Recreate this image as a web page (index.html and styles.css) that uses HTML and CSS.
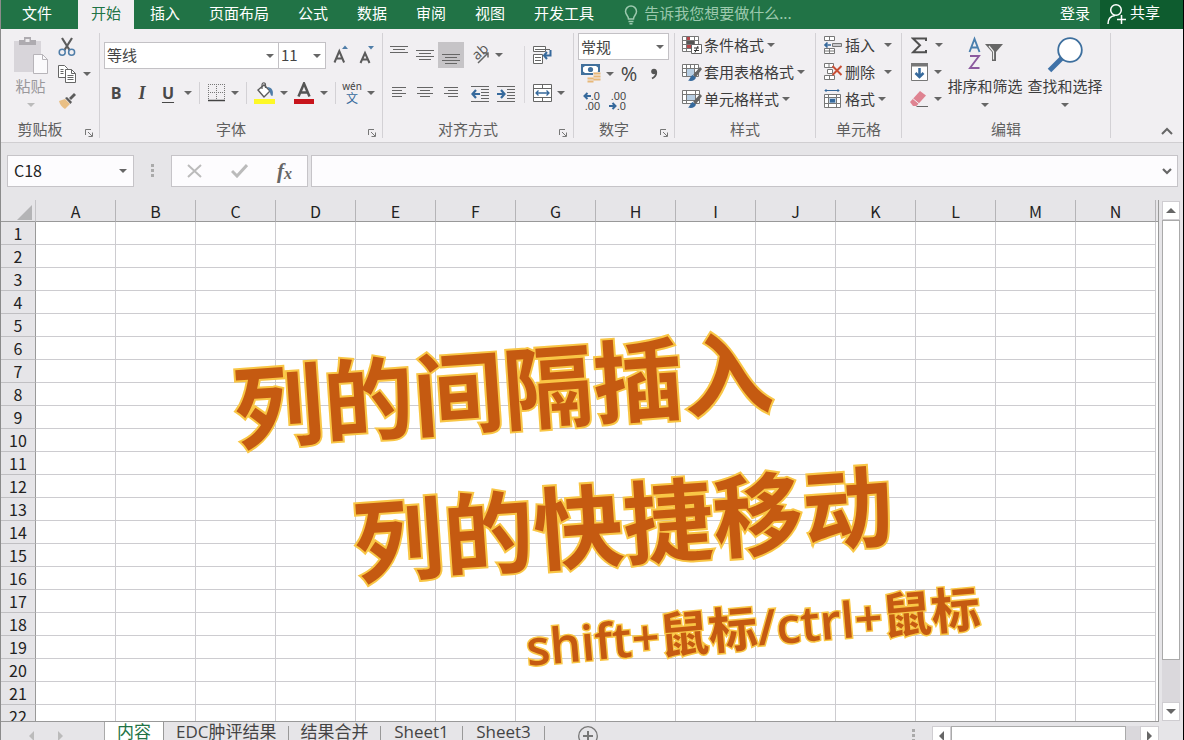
FILE: index.html
```html
<!DOCTYPE html>
<html lang="zh-CN">
<head>
<meta charset="utf-8">
<title>内容 - Excel</title>
<link rel="stylesheet" href="styles.css">
</head>
<body>
<div class="app">
  <header class="tabs">
    <button class="tab file">文件</button>
    <nav class="tab-list">
      <button class="tab active">开始</button>
      <button class="tab">插入</button>
      <button class="tab">页面布局</button>
      <button class="tab">公式</button>
      <button class="tab">数据</button>
      <button class="tab">审阅</button>
      <button class="tab">视图</button>
      <button class="tab">开发工具</button>
    </nav>
    <label class="tell">
      <svg width="14" height="20" viewBox="0 0 14 20" fill="none" stroke="#9cc9ae" stroke-width="1.5"><path d="M4.5 14C4.500 11 1.500 9.500 1.500 6.500a5.500 5.500 0 0 1 11 0C12.500 9.500 9.500 11 9.500 14zM4.500 16.500h5M5.500 18.700h3"/></svg>
      <input type="text" placeholder="告诉我您想要做什么..." aria-label="告诉我您想要做什么">
    </label>
    <button class="tab login">登录</button>
    <button class="share">
      <svg width="20" height="22" viewBox="0 0 20 22" fill="none" stroke="#fff" stroke-width="1.500"><circle cx="9" cy="7" r="5.300"/><path d="M1 21c0-5 3-8 7-8.500M14.500 12v9M10 16.500h9"/></svg>
      <span>共享</span>
    </button>
  </header>

  <section class="ribbon">
    <div class="group clipboard">
      <div class="body">
        <button class="big muted">
          <svg width="36" height="40" viewBox="0 0 36 40"><path d="M1 5h27v31H1z" fill="#d8d5da"/><path d="M6 4h5V1h7v3h5v5H6z" fill="#aeabb0"/><path d="M12.500 3h4v3h-4z" fill="#eceaed"/><path d="M20.500 18.500h9l5 5v14h-14z" fill="#fbfafc" stroke="#b7b4b9"/><path d="M29.500 18.500v5h5" fill="none" stroke="#b7b4b9"/></svg>
          <span>粘贴</span><i class="arrow"></i>
        </button>
        <div class="stack">
          <button class="ico w20" aria-label="剪切"><svg width="18" height="20" viewBox="0 0 18 20" fill="none"><path d="M4 1l7.500 12M14 1L6.500 13" stroke="#5c5c5c" stroke-width="2.200"/><circle cx="4.200" cy="15.200" r="3" stroke="#4f7da8" stroke-width="1.500"/><circle cx="13.600" cy="15.200" r="3" stroke="#4f7da8" stroke-width="1.500"/></svg></button>
          <div class="row"><button class="ico w20" aria-label="复制"><svg width="18" height="18" viewBox="0 0 18 18" fill="#fff" stroke="#666"><path d="M.5.5h6l3 3v9h-9z"/><path d="M2.500 4.500h3M2.500 6.500h3M2.500 8.500h3"/><path d="M7.500 4.500h6l4 4v9h-10z"/><path d="M13.500 4.500v4h4M9.500 10.500h6M9.500 12.500h6M9.500 14.500h6" fill="none"/></svg></button><button class="ico w20" aria-label="复制选项"><i class="arrow"></i></button></div>
          <button class="ico w20" aria-label="格式刷"><svg width="18" height="16" viewBox="0 0 18 16"><path d="M1 8l6-2 5 5-5 5C4 14 2 12 1 8z" fill="#e9bf85"/><path d="M7 5l2-1 5 5-1.500 2z" fill="#5c5c5c"/><path d="M11 5l5-5 2 2-5 5z" fill="#5c5c5c"/></svg></button>
        </div>
      </div>
      <div class="foot set"><span>剪贴板</span><button class="launch" aria-label="剪贴板设置"><svg width="8" height="8" viewBox="0 0 8 8" fill="none" stroke="#777"><path d="M.5 6V.5H6M3 3l4 4M7.500 3.500v4h-4"/></svg></button></div>
    </div>

    <div class="group font">
      <div class="body lines">
        <div class="row top">
          <span class="pick face"><select aria-label="字体"><option>等线</option></select></span>
          <span class="pick size"><select aria-label="字号"><option>11</option></select></span>
          <button class="ico w26 grow" aria-label="增大字号"><svg width="17" height="20" viewBox="0 0 17 20"><path d="M1.500 17.500L6.300 6l4.800 11.500M3 13.500h6.600" fill="none" stroke="#5a5a5a" stroke-width="2"/><path d="M9 4l3-3.500L15 4z" fill="#4f7da8"/></svg></button>
          <button class="ico w26" aria-label="减小字号"><svg width="17" height="20" viewBox="0 0 17 20"><path d="M1.500 18L6 8l4.500 10M3 14.500h6" fill="none" stroke="#5a5a5a" stroke-width="2"/><path d="M9 1h6l-3 3.500z" fill="#4f7da8"/></svg></button>
        </div>
        <div class="row">
          <button class="ico w26 b">B</button><button class="ico w26 i">I</button><button class="ico w26 u">U</button><button class="ico w14" aria-label="下划线选项"><i class="arrow"></i></button>
          <i class="sep"></i>
          <button class="ico w24" aria-label="边框"><svg width="17" height="18" viewBox="0 0 17 18" fill="none" stroke="#777"><path d="M0 .5h17M.5 0v16M16.500 0v16M8.500 0v16M0 8.500h17" stroke-dasharray="1 1"/><path d="M0 16.500h17" stroke="#444" stroke-width="1.500"/></svg></button><button class="ico w14" aria-label="边框选项"><i class="arrow"></i></button>
          <i class="sep"></i>
          <button class="ico w26" aria-label="填充颜色"><svg width="22" height="22" viewBox="0 0 22 22"><path d="M5 8l6-5 6 6-6 6z" fill="#fff" stroke="#5c5c5c" stroke-width="1.400"/><path d="M9 7V3c0-3 3.500-3 3.500 0v3" fill="none" stroke="#5c5c5c" stroke-width="1.200"/><path d="M14 5c5 0 7 4 5.500 9-3 0-1-4-5.500-9z" fill="#4f7da8"/><path d="M1 17h21v5H1z" fill="#fdf827"/></svg></button><button class="ico w14" aria-label="填充颜色选项"><i class="arrow"></i></button>
          <button class="ico w26" aria-label="字体颜色"><svg width="20" height="22" viewBox="0 0 20 22"><path d="M4.500 14.500L10 1.500l5.500 13M6.500 10.500h7" fill="none" stroke="#555" stroke-width="2.500"/><path d="M0 17h20v5H0z" fill="#c8141c"/></svg></button><button class="ico w14" aria-label="字体颜色选项"><i class="arrow"></i></button>
          <i class="sep"></i>
          <button class="ico w24 wen"><span>wén</span><b>文</b></button><button class="ico w14" aria-label="拼音选项"><i class="arrow"></i></button>
        </div>
      </div>
      <div class="foot set"><span>字体</span><button class="launch" aria-label="字体设置"><svg width="8" height="8" viewBox="0 0 8 8" fill="none" stroke="#777"><path d="M.5 6V.5H6M3 3l4 4M7.500 3.500v4h-4"/></svg></button></div>
    </div>

    <div class="group align">
      <div class="body">
        <div class="lines part">
          <div class="row top">
            <button class="ico w26" aria-label="顶端对齐"><svg width="18" height="26" viewBox="0 0 18 26" stroke="#666"><path d="M0 4.500h18M3 7.500h12M0 10.500h18"/></svg></button>
            <button class="ico w26" aria-label="垂直居中"><svg width="18" height="26" viewBox="0 0 18 26" stroke="#666"><path d="M0 8.500h18M3 11.500h12M0 14.500h18M3 17.500h12"/></svg></button>
            <button class="ico w26 on" aria-label="底端对齐"><svg width="18" height="26" viewBox="0 0 18 26" stroke="#666"><path d="M0 12.500h18M3 15.500h12M0 18.500h18M3 21.500h12"/></svg></button>
            <button class="ico w26 apart" aria-label="方向"><svg width="24" height="24" viewBox="0 0 24 24"><text x="5" y="17" font-size="14" transform="rotate(-42 8 12)">ab</text><path d="M10 20L20 10M15.500 10H20v4.500" fill="none" stroke="#666" stroke-width="1.500"/></svg></button><button class="ico w12" aria-label="方向选项"><i class="arrow"></i></button>
          </div>
          <div class="row">
            <button class="ico w26" aria-label="左对齐"><svg width="16" height="14" viewBox="0 0 16 14" stroke="#666"><path d="M1 1.500h14M1 4.500h10M1 7.500h14M1 10.500h10"/></svg></button>
            <button class="ico w26" aria-label="居中"><svg width="16" height="14" viewBox="0 0 16 14" stroke="#666"><path d="M0 1.500h16M3 4.500h10M0 7.500h16M3 10.500h10"/></svg></button>
            <button class="ico w26" aria-label="右对齐"><svg width="16" height="14" viewBox="0 0 16 14" stroke="#666"><path d="M1 1.500h14M5 4.500h10M1 7.500h14M5 10.500h10"/></svg></button>
            <button class="ico w26 apart" aria-label="减少缩进"><svg width="18" height="17" viewBox="0 0 18 17" fill="none" stroke="#666"><path d="M0 1.500h18M10 4.500h8M10 7.500h8M10 10.500h8M10 13.500h8M0 16.500h18"/><path d="M9 9H1.500M5 5L1.500 9 5 13" stroke="#36699c" stroke-width="2.200"/></svg></button>
            <button class="ico w26" aria-label="增加缩进"><svg width="18" height="17" viewBox="0 0 18 17" fill="none" stroke="#666"><path d="M0 1.500h18M10 4.500h8M10 7.500h8M10 10.500h8M10 13.500h8M0 16.500h18"/><path d="M0 9h7.500M4 5l3.500 4L4 13" stroke="#36699c" stroke-width="2.200"/></svg></button>
          </div>
        </div>
        <i class="rule"></i>
        <div class="lines part">
          <div class="row top"><button class="ico w26" aria-label="自动换行"><svg width="20" height="20" viewBox="0 0 20 20" fill="#fff" stroke="#666"><path d="M1.500 1.500h12v5h-12zM1.500 9.500h9v9h-9z"/><path d="M3 4.500h15M3 12.500h6M3 15.500h6"/><path d="M18.500 5v5.500H13M15 7l-3 3.500 3 3.500" fill="none" stroke="#36699c" stroke-width="2"/></svg></button></div>
          <div class="row"><button class="ico w26" aria-label="合并后居中"><svg width="19" height="20" viewBox="0 0 19 20" fill="#fff" stroke="#666"><path d="M.5 1.500h18v17H.5zM.5 5.500h18M.5 14.500h18M9.500 1.500v4M9.500 14.500v4"/><path d="M3 10h13M5.500 7.500L3 10l2.500 2.500M13.500 7.500L16 10l-2.500 2.500" fill="none" stroke="#36699c" stroke-width="1.300"/></svg></button><button class="ico w12" aria-label="合并选项"><i class="arrow"></i></button></div>
        </div>
      </div>
      <div class="foot set"><span>对齐方式</span><button class="launch" aria-label="对齐设置"><svg width="8" height="8" viewBox="0 0 8 8" fill="none" stroke="#777"><path d="M.5 6V.5H6M3 3l4 4M7.500 3.500v4h-4"/></svg></button></div>
    </div>

    <div class="group number">
      <div class="body stack">
        <span class="pick"><select aria-label="数字格式"><option>常规</option></select></span>
        <div class="row">
          <button class="ico w26" aria-label="会计数字格式"><svg width="20" height="19" viewBox="0 0 20 19"><path d="M0 0h19v11H0z" fill="#41709c"/><path d="M2 3.500L4 2h11l2 1.500v4L15 9H4L2 7.500z" fill="#fff"/><circle cx="9.500" cy="5.500" r="2.600" fill="#41709c"/><path d="M12 8h8v10h-6v1H6v-6h6z" fill="#f1eff2"/><path d="M12.500 9.500h7M12.500 12.500h7M12.500 15.500h7M6.500 14.500h6M6.500 17.500h6" stroke="#e8b878" stroke-width="2"/></svg></button><button class="ico w12" aria-label="会计选项"><i class="arrow"></i></button>
          <button class="ico w26 pct">%</button><button class="ico w24" aria-label="千位分隔"><svg width="8" height="12" viewBox="0 0 8 12"><circle cx="4" cy="3.500" r="2.800" fill="#555"/><path d="M6 3c1 4-1 6-4 7.500" fill="none" stroke="#555" stroke-width="1.800"/></svg></button>
        </div>
        <div class="row">
          <button class="ico w26 dec"><span><svg width="8" height="8" viewBox="0 0 8 8" fill="none" stroke="#36699c" stroke-width="2"><path d="M8 4H1.500M4.500 1l-3 3 3 3"/></svg>.0</span><span>.00</span></button>
          <button class="ico w26 dec"><span>.00</span><span><svg width="8" height="8" viewBox="0 0 8 8" fill="none" stroke="#36699c" stroke-width="2"><path d="M0 4h6.500M3.500 1l3 3-3 3"/></svg>.0</span></button>
        </div>
      </div>
      <div class="foot set"><span>数字</span><button class="launch" aria-label="数字设置"><svg width="8" height="8" viewBox="0 0 8 8" fill="none" stroke="#777"><path d="M.5 6V.5H6M3 3l4 4M7.500 3.500v4h-4"/></svg></button></div>
    </div>

    <div class="group styles">
      <div class="body stack">
        <button class="cmd"><svg width="20" height="20" viewBox="0 0 20 20"><path d="M.5 1.500h16v15H.5zM.5 5.500h16M.5 9.500h16M.5 13.500h16M4.500 1.500v15M12.500 1.500v15" fill="#fff" stroke="#777"/><path d="M5 2h3v3H5zM5 10h4v3H5z" fill="#b5474b"/><path d="M5 6h7v3H5z" fill="#555"/><path d="M9.500 9.500h10v9h-10z" fill="#fff" stroke="#666"/><path d="M12 13h5M12 15.500h5M16 11l-3 6.500" stroke="#333" fill="none"/></svg>条件格式<i class="arrow"></i></button>
        <button class="cmd"><svg width="20" height="20" viewBox="0 0 20 20"><path d="M.5 2.500h16v12H.5zM.5 6.500h16M.5 10.500h16M4.500 2.500v12M8.500 2.500v12M12.500 2.500v12" fill="#fff" stroke="#777"/><path d="M5 7h7v7H5z" fill="#b8cfe4"/><path d="M18 5l2 2-6 8-3-2z" fill="#666"/><path d="M10.500 13l3.500 2.500c-1 3-4 4-8 3 2-1 2-4 4.500-5.500z" fill="#36699c"/></svg>套用表格格式<i class="arrow"></i></button>
        <button class="cmd"><svg width="20" height="20" viewBox="0 0 20 20"><path d="M.5 1.500h17v13H.5zM.5 5.500h17M.5 11.500h17M4.500 1.500v13M13.500 1.500v13" fill="#fff" stroke="#777"/><path d="M5 6h8v5H5z" fill="#b8cfe4"/><path d="M18 5l2 2-6 8-3-2z" fill="#666"/><path d="M10.500 13l3.500 2.500c-1 3-4 4-8 3 2-1 2-4 4.500-5.500z" fill="#36699c"/></svg>单元格样式<i class="arrow"></i></button>
      </div>
      <div class="foot"><span>样式</span></div>
    </div>

    <div class="group cells">
      <div class="body stack">
        <button class="cmd far"><svg width="20" height="20" viewBox="0 0 20 20"><path d="M1.500 1.500h10v4h-10zM6.500 1.500v4M1.500 13.500h10v5h-10zM6.500 13.500v5M1.500 16h10" fill="#fff" stroke="#777"/><path d="M9.500 8.500h9v3h-9z" fill="#c9c9cd" stroke="#777"/><path d="M8 10H2M4.500 7.500L2 10l2.500 2.500" fill="none" stroke="#36699c" stroke-width="1.700"/></svg>插入<i class="arrow"></i></button>
        <button class="cmd far"><svg width="20" height="20" viewBox="0 0 20 20"><path d="M1.500 1.500h9v4h-9zM6 1.500v4M1.500 13.500h10v4h-10zM6.500 13.500v4M4.500 7.500h5v4h-5z" fill="#fff" stroke="#777"/><path d="M9.500 4l9 9M18.500 4l-9 9" stroke="#c94f35" stroke-width="2"/></svg>删除<i class="arrow"></i></button>
        <button class="cmd"><svg width="20" height="20" viewBox="0 0 20 20" fill="none" stroke="#777"><path d="M2 1.500h14M3.500 0L2 1.500 3.500 3M14.500 0L16 1.500 14.500 3" stroke="#36699c"/><path d="M1.500 5.500h16v13h-16zM1.500 8.500h16M1.500 14.500h16M5.500 5.500v13M13.500 5.500v13" fill="#fff"/><path d="M5.500 8.500h8v6h-8z" fill="#b8cfe4"/><path d="M7 10h5v3.500H7z" fill="#36699c" stroke="none"/></svg>格式<i class="arrow"></i></button>
      </div>
      <div class="foot"><span>单元格</span></div>
    </div>

    <div class="group editing">
      <div class="body">
        <div class="stack">
          <div class="row"><button class="ico w26" aria-label="求和"><svg width="16" height="17" viewBox="0 0 16 17"><path d="M15 4V1.500H2L9 8.300 2 15.300h13V13" fill="none" stroke="#505050" stroke-width="2"/></svg></button><button class="ico w14" aria-label="求和选项"><i class="arrow"></i></button></div>
          <div class="row"><button class="ico w26" aria-label="填充"><svg width="17" height="18" viewBox="0 0 17 18"><path d="M.5.5h16v17H.5z" fill="#fff" stroke="#777"/><path d="M0 0h17v3.500H0z" fill="#777"/><path d="M8.500 5v9M4.500 10l4 4 4-4" fill="none" stroke="#36699c" stroke-width="2.500"/></svg></button><button class="ico w12" aria-label="填充选项"><i class="arrow"></i></button></div>
          <div class="row"><button class="ico w26" aria-label="清除"><svg width="18" height="18" viewBox="0 0 18 18"><path d="M0 12L10 1l6 4.500L6.500 16H3z" fill="#df8391"/><path d="M3 8.700l6 5" stroke="#f1eff2"/><path d="M6.500 16.500H18" stroke="#666"/></svg></button><button class="ico w12" aria-label="清除选项"><i class="arrow"></i></button></div>
        </div>
        <button class="big wide">
          <svg width="36" height="40" viewBox="0 0 36 40" fill="none"><path d="M2.500 16L7.500 3l5 13M4.300 11.500h6.500" stroke="#4a7fae" stroke-width="1.900"/><path d="M3 20h9L3 32h9.500" stroke="#8c5a9f" stroke-width="1.900"/><path d="M18 8h18l-7 8v9h-4v-9z" fill="#666"/><path d="M22 10l4.500 5.500v8" stroke="#eee" stroke-width="1.200"/></svg>
          <span>排序和筛选</span><i class="arrow"></i>
        </button>
        <button class="big wide">
          <svg width="36" height="40" viewBox="0 0 36 40"><path d="M2.500 34.500L15 22" stroke="#3f72a8" stroke-width="5"/><circle cx="23" cy="14" r="11.800" fill="#fff" stroke="#3d6f9e" stroke-width="1.800"/></svg>
          <span>查找和选择</span><i class="arrow"></i>
        </button>
      </div>
      <div class="foot"><span>编辑</span></div>
    </div>
    <button class="collapse" aria-label="折叠功能区"><svg width="12" height="8" viewBox="0 0 12 8" fill="none" stroke="#666" stroke-width="2"><path d="M1 7l5-5 5 5"/></svg></button>
  </section>

  <section class="formula">
    <div class="namebox"><input type="text" value="C18" aria-label="名称框"><button class="ico w20" aria-label="名称列表"><i class="arrow"></i></button></div>
    <i class="dots"></i>
    <div class="fx">
      <button aria-label="取消"><svg width="16" height="14" viewBox="0 0 16 14" fill="none" stroke="#bbb" stroke-width="2"><path d="M1 1l13 12M14 1L1 13"/></svg></button>
      <button aria-label="输入"><svg width="17" height="14" viewBox="0 0 17 14" fill="none" stroke="#bbb" stroke-width="3"><path d="M1 7l5 5L16 1"/></svg></button>
      <button class="fn" aria-label="插入函数">f<small>x</small></button>
    </div>
    <div class="entry"><input type="text" aria-label="编辑栏"><button class="ico w20" aria-label="展开编辑栏"><svg width="10" height="7" viewBox="0 0 10 7" fill="none" stroke="#666" stroke-width="2.200"><path d="M1 1l4 4 4-4"/></svg></button></div>
  </section>

  <main class="work">
    <div class="sheet">
      <table class="grid">
        <thead><tr id="letters"><th class="corner"><svg width="15" height="15" viewBox="0 0 15 15"><path d="M15 0v15H0z" fill="#b4b4b6"/></svg></th></tr></thead>
        <tbody id="rows"></tbody>
      </table>
      <div class="art one">列的间隔插入</div>
      <div class="art two">列的快捷移动</div>
      <div class="art three">shift+鼠标/ctrl+鼠标</div>
    </div>
    <div class="vscroll">
      <button aria-label="向上滚动"><i class="tri up"></i></button>
      <div class="thumb"></div><div class="track"></div>
      <button aria-label="向下滚动"><i class="tri down"></i></button>
    </div>
  </main>

  <footer class="bottom">
    <div class="nav"><i class="tri left pale"></i><i class="tri right pale"></i></div>
    <nav class="sheets">
      <button class="current">内容</button>
      <button>EDC肿评结果</button>
      <button>结果合并</button>
      <button>Sheet1</button>
      <button>Sheet3</button>
    </nav>
    <button class="add" aria-label="新工作表"><svg width="20" height="20" viewBox="0 0 20 20" fill="none" stroke="#777"><circle cx="10" cy="10" r="9.300" stroke-width="1.300"/><path d="M10 5v10M5 10h10" stroke-width="2"/></svg></button>
    <i class="dots"></i>
    <div class="hscroll">
      <button aria-label="向左滚动"><i class="tri left"></i></button>
      <div class="thumb"></div><div class="track"></div>
      <button aria-label="向右滚动"><i class="tri right"></i></button>
    </div>
  </footer>
</div>
<script src="script.js"></script>
</body>
</html>
```
FILE: styles.css
```css
* { box-sizing: border-box; }
html, body { height: 100%; }
body { margin: 0; font: 15px/20px "Noto Sans CJK SC", sans-serif; color: #444; overflow: hidden; }
button, input, select { font: inherit; color: inherit; background: none; border: 0; padding: 0; margin: 0; border-radius: 0; outline: 0; }
button { display: flex; align-items: center; justify-content: center; white-space: nowrap; flex: none; }
svg { display: block; flex: none; }
svg text { font-family: "Open Sans", sans-serif; fill: #555; }
.app { height: 100vh; display: flex; flex-direction: column; background: #e6e5e8; border-left: 1px solid #8b8b8b; border-right: 1px solid #000; }

.tabs { display: flex; height: 29px; background: #217346; color: #fff; flex: none; }
.tab-list { display: flex; gap: 3px; }
.tab { padding: 0 13px 4px; height: 29px; }
.file { width: 77px; padding-right: 18px; }
.active { background: #f1eff2; color: #217346; }
.tell { display: flex; align-items: center; gap: 6px; margin-left: 17px; flex: 1; min-width: 0; }
.tell input { flex: 1; min-width: 0; padding-bottom: 3px; }
.tell input::placeholder { color: #9cc9ae; opacity: 1; }
.login { padding: 0 10px 4px; }
.share { width: 83px; background: #0e5c2f; gap: 3px; padding: 0 16px 2px 0; }
.share span { padding-bottom: 3px; }

.ribbon { display: flex; flex: none; height: 114px; padding: 4px 0; background: #f1eff2; border-bottom: 1px solid #d0ced1; }
.group { flex: none; display: flex; flex-direction: column; border-right: 1px solid #d3d1d5; }
.body { display: flex; height: 87px; }
.foot { display: flex; align-items: center; justify-content: center; height: 18px; position: relative; color: #5f5f5f; }
.set { padding-right: 20px; }
.launch { position: absolute; right: 6px; bottom: 1px; }
.row { display: flex; align-items: center; }
.ico { height: 24px; }
.w12 { width: 12px; } .w14 { width: 14px; } .w20 { width: 20px; } .w24 { width: 24px; } .w26 { width: 26px; }
.arrow { width: 0; height: 0; border: 4px solid transparent; border-top-color: #666; border-bottom: 0; flex: none; }
.sep { width: 1px; height: 22px; margin: 0 4px; background: #d3d1d5; }
.stack { display: flex; flex-direction: column; }
.stack > * { height: 27px; }
.big { flex-direction: column; justify-content: flex-start; width: 45px; padding-top: 3px; }
.big svg { height: 40px; }
.big .arrow { margin-top: 7px; }
.muted { color: #9a989c; }
.muted .arrow { border-top-color: #bbb; }
.wide { width: 80px; }

.clipboard { width: 99px; }
.clipboard .body { padding-left: 7px; gap: 4px; }
.font { width: 283px; }
.lines { flex-direction: column; padding: 9px 0 0 3px; }
.lines .row { height: 26px; margin-bottom: 12px; }
.font .top { padding-left: 1px; }
.pick { position: relative; height: 27px; border: 1px solid #c3c1c5; background: #fff; flex: none; }
.pick select { appearance: none; width: 100%; height: 25px; line-height: 20px; padding-left: 2px; }
.pick::after { content: ""; position: absolute; right: 4px; top: 11px; border: 4px solid transparent; border-top-color: #666; border-bottom: 0; pointer-events: none; }
.face { width: 175px; }
.size { width: 48px; margin-left: -1px; }
.grow { margin-left: 2px; }
.b, .i, .u { font: bold 16px/20px "Open Sans", sans-serif; color: #484848; }
.i { font-family: "Liberation Serif", serif; font-style: italic; font-size: 18px; }
.u { text-decoration: underline; text-underline-offset: 3px; }
.wen { flex-direction: column; font: 10px/10px "Noto Sans", sans-serif; }
.wen b { font: 12px/14px "Noto Sans CJK SC", sans-serif; color: #36699c; }

.align { width: 191px; }
.align .lines .ico { height: 26px; }
.part { display: flex; padding-left: 4px; }
.part:first-child { width: 141px; padding-left: 3px; }
.apart { margin-left: 3px; }
.on { background: #c6c4c7; }
.rule { width: 1px; height: 57px; margin-top: 13px; background: #d9d7db; }
.number { width: 101px; }
.number .body { padding-left: 4px; }
.number .pick { width: 91px; }
.pct { font: 20px/24px "Open Sans", sans-serif; }
.dec { flex-direction: column; align-items: flex-end; font: 11px/10px "Liberation Sans", sans-serif; padding-right: 4px; }
.dec span { display: flex; align-items: center; }
.styles { width: 141px; }
.cells { width: 86px; }
.styles .body, .cells .body { padding-left: 7px; align-items: flex-start; }
.cmd { gap: 2px; height: 27px; padding-bottom: 3px; color: #3c3c3c; }
.cmd .arrow { margin-left: 1px; }
.far .arrow { margin-left: 7px; }
.editing { width: 209px; }
.editing .body { padding-left: 4px; color: #3c3c3c; }
.editing .stack { width: 39px; }
.editing .row { padding-bottom: 3px; }
.collapse { margin: auto 10px 3px auto; }

.formula { display: flex; align-items: center; height: 57px; flex: none; padding: 12px 5px 13px 6px; color: #222; }
.formula > div { height: 32px; background: #fdfcfe; border: 1px solid #c6c4c8; display: flex; align-items: center; }
.formula input { font-size: 16px; padding: 0 0 2px 6px; min-width: 0; flex: 1; }
.namebox { width: 127px; }
.dots { width: 3px; height: 14px; margin: 0 17px; background: repeating-linear-gradient(#aaa 0 3px, transparent 3px 5px); }
.fx { width: 137px; }
.fx button { flex: 1; height: 30px; }
.fx .fn { font: italic bold 21px/24px "Liberation Serif", serif; color: #666; }
.fn small { font-size: 16px; align-self: flex-end; }
.entry { flex: 1; margin-left: 3px; }

.work { flex: 1; min-height: 0; display: flex; }
.sheet { flex: 1; min-width: 0; position: relative; overflow: hidden; background: linear-gradient(#e6e5e8 0 21px, #999 21px 22px, #fff 22px); border-right: 1px solid #999; }
.grid { border-collapse: separate; border-spacing: 0; table-layout: fixed; width: 1155px; color: #222; font-size: 16px; line-height: 20px; }
.grid th { font-weight: 400; padding: 0; background: #e6e5e8; }
.grid thead th { width: 80px; height: 22px; border-right: 1px solid #b5b4b7; border-bottom: 1px solid #999; }
.grid thead .corner { width: 35px; border-right-color: #c5c4c7; }
.corner svg { margin: 3px 0 0 16px; }
.grid tbody th { height: 23px; border-right: 1px solid #999; border-bottom: 1px solid #c0bfc2; }
.grid td { padding: 0; border-right: 1px solid #cdccd0; border-bottom: 1px solid #cdccd0; }
.art { position: absolute; white-space: nowrap; font-weight: 700; font-family: "Open Sans", "Noto Sans CJK SC", sans-serif; color: #c55a11; -webkit-text-stroke: 4px #f9c645; paint-order: stroke fill; line-height: 100px; transform: translate(-50%, -50%) rotate(-4deg); }
.one { left: 502px; top: 189px; font-size: 90px; }
.two { left: 622px; top: 323px; font-size: 90px; }
.three { left: 752px; top: 427px; font-size: 49px; font-weight: 600; -webkit-text-stroke-width: 3px; transform: translate(-50%, -50%) rotate(-5deg); }

.vscroll { width: 24px; padding: 1px 3px 0 3px; display: flex; flex-direction: column; flex: none; }
.vscroll button { height: 19px; }
.vscroll button, .hscroll button { background: #fff; border: 1px solid #cfcdd1; }
.thumb { background: #fff; border: 1px solid #aaa; }
.track { background: #dad8dc; }
.vscroll .thumb { flex: 441; }
.vscroll .track { flex: 42; }
.tri { width: 0; height: 0; border: 5px solid transparent; }
.up { border-bottom-color: #666; border-top: 0; }
.down { border-top-color: #666; border-bottom: 0; }
.left { border-right-color: #666; border-left: 0; }
.right { border-left-color: #666; border-right: 0; }
.pale.left { border-right-color: #bbb; }
.pale.right { border-left-color: #bbb; }

.bottom { display: flex; height: 19px; flex: none; overflow: hidden; margin-right: 24px; border-top: 1px solid #999; align-items: flex-start; }
.nav { width: 104px; height: 28px; display: flex; align-items: center; gap: 24px; padding-left: 28px; border-right: 1px solid #aaa; }
.sheets { display: flex; }
.sheets button { font: 17px/20px "Open Sans", "Noto Sans CJK SC", sans-serif; padding: 0 12px; min-width: 82px; height: 20px; position: relative; }
.sheets button:not(.current)::after { content: ""; position: absolute; right: 0; top: 4px; width: 1px; height: 16px; background: #999; }
.sheets .current { min-width: 58px; background: #fff; color: #217346; border-right: 1px solid #999; height: 22px; margin-top: -1px; }
.add { margin: 4px auto 0 33px; }
.bottom .dots { margin: 7px 17px 0; }
.hscroll { display: flex; width: 227px; height: 22px; margin-top: 4px; }
.hscroll button { width: 19px; height: 20px; }
.hscroll .thumb { flex: 177; }
.hscroll .track { flex: 14; }
```
FILE: script.js
```js
const letters = "ABCDEFGHIJKLMN";
const head = document.getElementById("letters");
for (const letter of letters) {
  const th = document.createElement("th");
  th.textContent = letter;
  head.append(th);
}
const body = document.getElementById("rows");
for (let n = 1; n <= 22; n++) {
  const tr = document.createElement("tr");
  tr.innerHTML = `<th>${n}</th>` + "<td></td>".repeat(letters.length);
  body.append(tr);
}
```
